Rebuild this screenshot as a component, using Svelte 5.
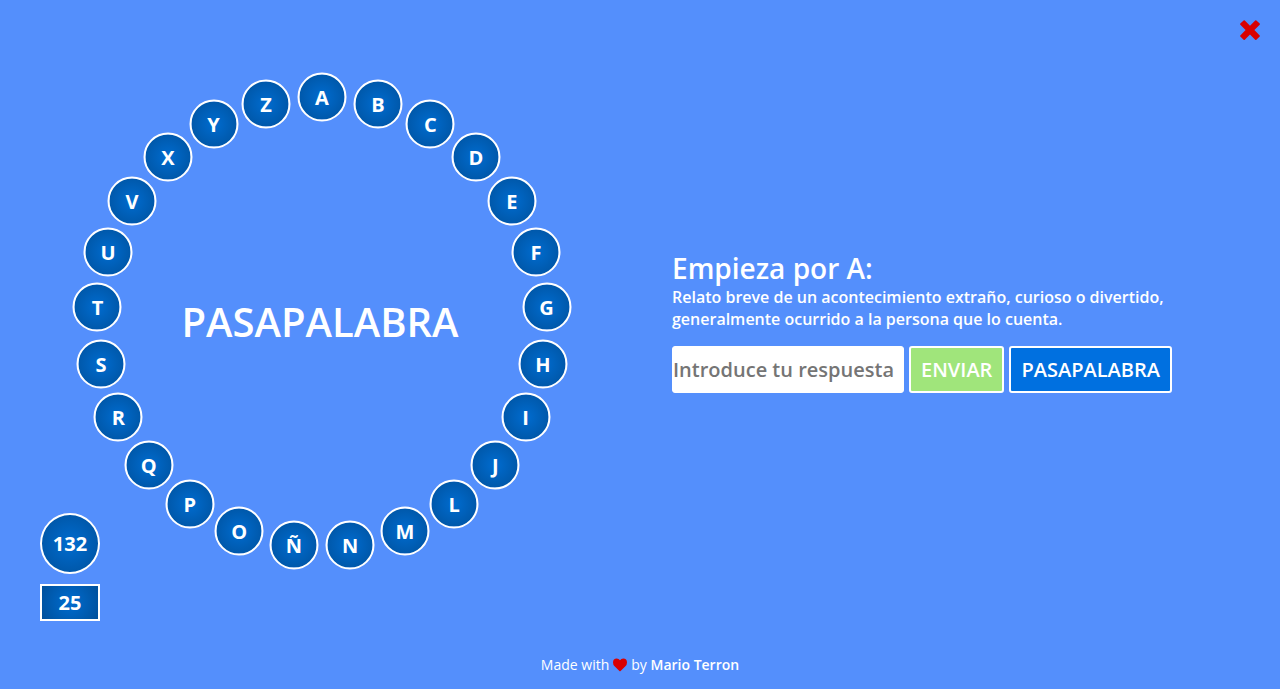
<script>
  const letters = [...'ABCDEFGHIJLMNÑOPQRSTUVXYZ'];
  const placed = letters.map((letter, i) => {
    const angle = (i / letters.length) * 2 * Math.PI;
    return {
      letter,
      x: 50 + 50 * Math.sin(angle),
      y: 50 - 50 * Math.cos(angle)
    };
  });

  let answer = $state('');
  const seconds = 132;
  const remaining = 25;
</script>

<div class="page">
  <main>
    <section class="board">
      <h1>PASAPALABRA</h1>
      <div class="ring">
        {#each placed as item}
          <span class="letter" style="left: {item.x}%; top: {item.y}%">{item.letter}</span>
        {/each}
      </div>
      <div class="counters">
        <div class="counter round">{seconds}</div>
        <div class="counter">{remaining}</div>
      </div>
    </section>

    <section class="question">
      <h2>Empieza por A:</h2>
      <p>Relato breve de un acontecimiento extraño, curioso o divertido, generalmente ocurrido a la persona que lo cuenta.</p>
      <form onsubmit={(event) => event.preventDefault()}>
        <input type="text" aria-label="Respuesta" placeholder="Introduce tu respuesta" bind:value={answer} />
        <button type="submit" class="send">ENVIAR</button>
        <button type="button" class="pass">PASAPALABRA</button>
      </form>
    </section>
  </main>

  <button class="close" type="button" aria-label="Cerrar">
    <svg viewBox="0 0 22 22" width="22" height="22" aria-hidden="true">
      <path fill="#d90000" d="M1.3 4.6 4.6 1.4Q5.2.9 5.8 1.4L11 6.8 16.2 1.4Q16.8.9 17.4 1.4L20.7 4.6Q21.2 5.2 20.7 5.8L15.4 11.1 20.7 16.4Q21.2 17 20.7 17.6L17.4 20.8Q16.8 21.3 16.2 20.8L11 15.5 5.8 20.8Q5.2 21.3 4.6 20.8L1.3 17.6Q.8 17 1.3 16.4L6.6 11.1 1.3 5.8Q.8 5.2 1.3 4.6Z" />
    </svg>
  </button>

  <footer>
    <span>Made with</span>
    <svg viewBox="0 0 14 14" width="14" height="14" role="img" aria-label="love">
      <path fill="#d90000" d="M7 13.3Q6.7 13.3 6.4 13L1.6 8.3Q0 6.7 0 4.5 0 .6 3.8.6 5.7.6 7 2.2 8.3.6 10.2.6 14 .6 14 4.5 14 6.7 12.4 8.3L7.6 13Q7.3 13.3 7 13.3Z" />
    </svg>
    <span>by <strong>Mario Terron</strong></span>
  </footer>
</div>

<style>
  :global(body) {
    margin: 0;
    background: #548ffc;
  }

  .page {
    box-sizing: border-box;
    min-height: 100vh;
    display: grid;
    grid-template-rows: 1fr auto;
    color: #fff;
    font-family: 'Open Sans', sans-serif;
    font-weight: 600;
  }

  main {
    grid-area: 1 / 1;
    display: grid;
    grid-template-columns: repeat(auto-fit, minmax(560px, 1fr));
    align-items: center;
  }

  .board {
    display: grid;
    align-self: stretch;
  }

  .ring {
    grid-area: 1 / 1;
    place-self: center;
    position: relative;
    width: 450px;
    aspect-ratio: 1;
    margin: 32px 0 32px 4px;
  }

  h1 {
    grid-area: 1 / 1;
    place-self: center;
    margin: 0;
    font-size: 40px;
    font-weight: 600;
    line-height: 56px;
  }

  .letter {
    position: absolute;
    transform: translate(-50%, -50%);
    box-sizing: border-box;
    width: 49px;
    height: 49px;
    display: grid;
    place-items: center;
    border: 2px solid #fff;
    border-radius: 50%;
    background: radial-gradient(circle, #006cd0, #00509b);
    font-size: 20px;
    font-weight: 700;
  }

  .counters {
    grid-area: 1 / 1;
    place-self: end start;
    display: grid;
    gap: 10px;
    margin: 0 0 22px 40px;
  }

  .counter {
    box-sizing: border-box;
    width: 60px;
    height: 37px;
    display: grid;
    place-items: center;
    border: 2px solid #fff;
    background: radial-gradient(circle, #006cd0, #00509b);
    font-size: 20px;
    font-weight: 700;
    line-height: 28px;
  }

  .round {
    height: 61px;
    border-radius: 50%;
  }

  .question {
    padding: 0 32px;
  }

  h2 {
    margin: 0;
    font-size: 28px;
    font-weight: 600;
    line-height: 36px;
  }

  p {
    max-width: 500px;
    margin: 0;
    font-size: 16px;
    font-weight: 600;
    line-height: 22px;
  }

  form {
    display: flex;
    flex-wrap: wrap;
    gap: 5px;
    margin-top: 16px;
  }

  input,
  form button {
    box-sizing: border-box;
    height: 47px;
    border: 2px solid #fff;
    border-radius: 3px;
    color: #fff;
    font: inherit;
    font-size: 20px;
  }

  input {
    width: 232px;
    padding: 0;
    border-width: 1px;
    background: #fff;
    color: #222;
  }

  input::placeholder {
    color: #757575;
  }

  form button {
    padding: 0 10px;
    cursor: pointer;
  }

  .send {
    background: #a0e57b;
  }

  .pass {
    background: #0070e0;
  }

  .close {
    grid-area: 1 / 1;
    place-self: start end;
    display: grid;
    margin: 19px 19px 0 0;
    padding: 0;
    border: 0;
    background: none;
    cursor: pointer;
  }

  footer {
    display: flex;
    justify-content: center;
    align-items: center;
    gap: 4px;
    padding: 12px 0 14px;
    font-size: 14px;
    line-height: 20px;
    font-weight: 400;
  }

  strong {
    font-weight: 600;
  }
</style>
